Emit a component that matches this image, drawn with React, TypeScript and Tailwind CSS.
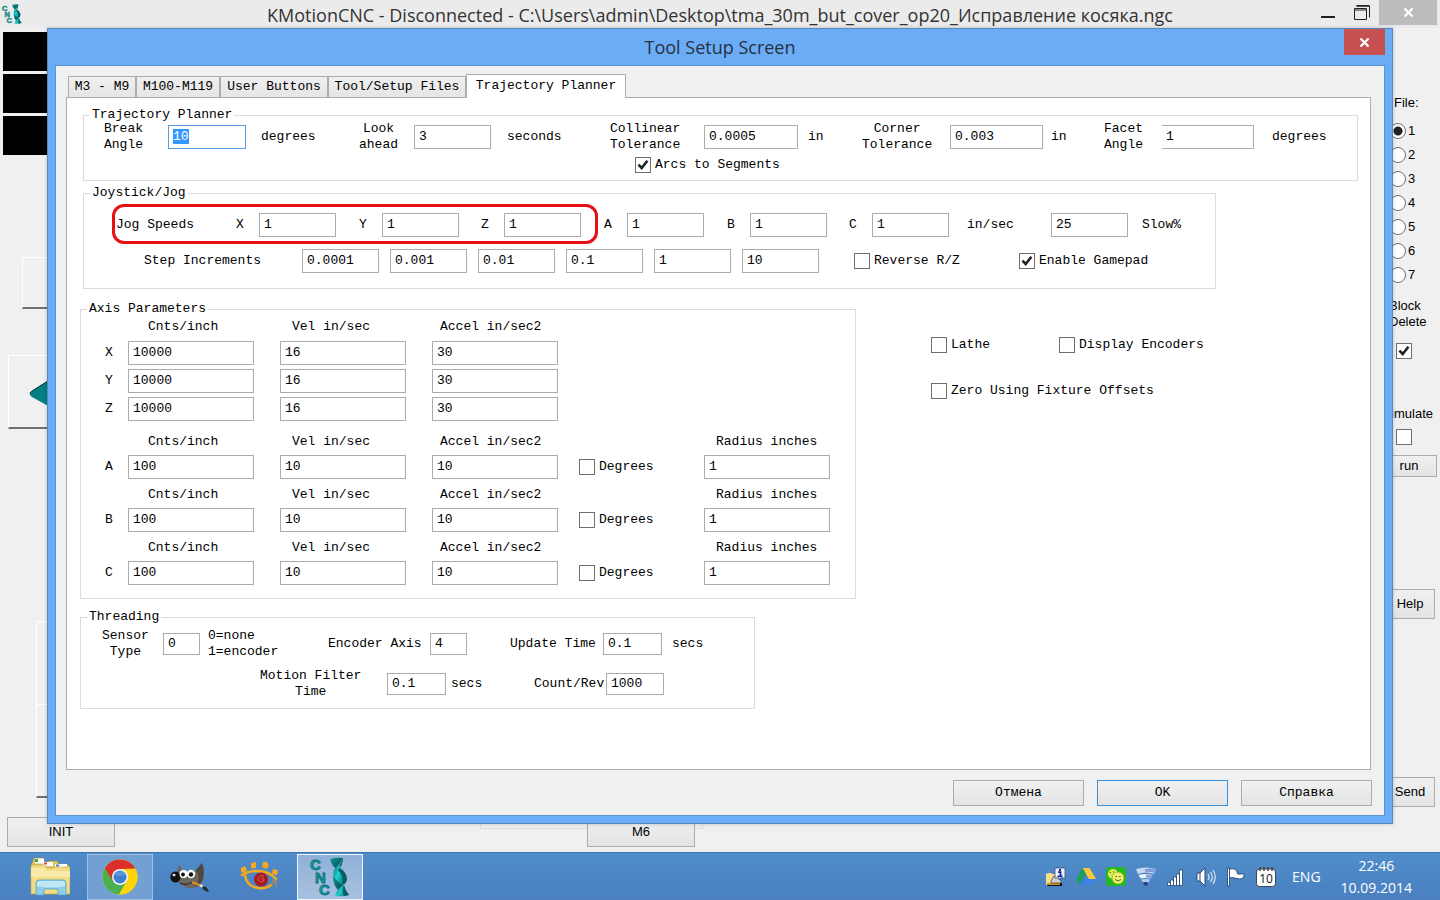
import React from 'react';

const MONO = "font-['Liberation_Mono','Courier_New',monospace]";
const UI = "font-['Open_Sans','Segoe_UI',sans-serif]";
const SANS = "font-['Liberation_Sans',Arial,sans-serif]";

type AxisRow = { axis: string; cnts: string; vel: string; accel: string };

const LINEAR_AXES: AxisRow[] = [
  { axis: 'X', cnts: '10000', vel: '16', accel: '30' },
  { axis: 'Y', cnts: '10000', vel: '16', accel: '30' },
  { axis: 'Z', cnts: '10000', vel: '16', accel: '30' },
];

const ROTARY_AXES: AxisRow[] = [
  { axis: 'A', cnts: '100', vel: '10', accel: '10' },
  { axis: 'B', cnts: '100', vel: '10', accel: '10' },
  { axis: 'C', cnts: '100', vel: '10', accel: '10' },
];

const STEPS = ['0.0001', '0.001', '0.01', '0.1', '1', '10'];
const JOG_AXES = ['X', 'Y', 'Z', 'A', 'B', 'C'];

const TABS = [
  { name: 'M3 - M9', width: 'w-[68px]' },
  { name: 'M100-M119', width: 'w-[84px]' },
  { name: 'User Buttons', width: 'w-[108px]' },
  { name: 'Tool/Setup Files', width: 'w-[138px]' },
  { name: 'Trajectory Planner', width: 'w-[160px]' },
];

/* ---------- form controls ---------- */

function TextField({
  className = 'w-[77px]',
  ...props
}: React.InputHTMLAttributes<HTMLInputElement>) {
  return (
    <input
      type="text"
      className={`h-6 border border-[#ababab] bg-white px-1 pb-0.5 leading-4 text-black outline-none selection:bg-[#3399ff] selection:text-white focus:border-[#569de5] ${className}`}
      {...props}
    />
  );
}

function CheckMark() {
  return (
    <svg
      className="pointer-events-none absolute inset-0 hidden h-4 w-4 peer-checked:block"
      viewBox="0 0 16 16"
      fill="none"
      stroke="#212121"
      strokeWidth="2.6"
    >
      <path d="M3.4 7.6 6.7 11 12.4 3.8" />
    </svg>
  );
}

function CheckBox({ label, checked, hideLabel }: { label: string; checked?: boolean; hideLabel?: boolean }) {
  return (
    <label className="flex h-4 items-center gap-1 whitespace-nowrap">
      <span className="relative h-4 w-4 shrink-0">
        <input
          type="checkbox"
          defaultChecked={checked}
          aria-label={label}
          className="peer block h-4 w-4 appearance-none border border-[#6f6f6f] bg-white"
        />
        <CheckMark />
      </span>
      {!hideLabel && <span>{label}</span>}
    </label>
  );
}

function Group({
  title,
  className = '',
  children,
}: {
  title: string;
  className?: string;
  children: React.ReactNode;
}) {
  return (
    <fieldset className={`border border-[#dcdcdc] ${className}`}>
      <legend className="ml-1.5 px-0.5 leading-3">{title}</legend>
      {children}
    </fieldset>
  );
}

function GrayButton({ className = '', children }: { className?: string; children: React.ReactNode }) {
  return (
    <button
      type="button"
      className={`border bg-linear-to-b from-[#f0f0f0] to-[#e4e4e4] text-center text-black ${className}`}
    >
      {children}
    </button>
  );
}

function CloseGlyph({ className }: { className: string }) {
  return (
    <svg className={className} viewBox="0 0 12 10" fill="none" stroke="white" strokeWidth="2.4">
      <path d="M1.5.5l9 9M10.5.5l-9 9" />
    </svg>
  );
}

/* ---------- tab page ---------- */

function TrajectoryGroup() {
  return (
    <Group title="Trajectory Planner" className="mr-3 ml-4 pb-[7px]">
      <div className="grid grid-cols-[64px_93px_98px_55px_93px_103px_94px_104px_54px_88px_101px_53px_58px_110px_1fr] items-center justify-items-start pl-5">
        <label htmlFor="break-angle" className="text-center">
          Break
          <br />
          Angle
        </label>
        <TextField
          id="break-angle"
          className="w-[78px]"
          defaultValue="10"
          autoFocus
          onFocus={e => e.currentTarget.select()}
        />
        <span>degrees</span>
        <label htmlFor="look-ahead" className="text-center">
          Look
          <br />
          ahead
        </label>
        <TextField id="look-ahead" defaultValue="3" />
        <span>seconds</span>
        <label htmlFor="collinear" className="text-center">
          Collinear
          <br />
          Tolerance
        </label>
        <TextField id="collinear" className="w-[94px]" defaultValue="0.0005" />
        <span>in</span>
        <label htmlFor="corner" className="text-center">
          Corner
          <br />
          Tolerance
        </label>
        <TextField id="corner" className="w-[93px]" defaultValue="0.003" />
        <span>in</span>
        <label htmlFor="facet" className="text-center">
          Facet
          <br />
          Angle
        </label>
        <TextField id="facet" className="w-[92px] border-l-0" defaultValue="1" />
        <span>degrees</span>
      </div>
      <div className="mt-1 pl-[551px]">
        <CheckBox label="Arcs to Segments" checked />
      </div>
    </Group>
  );
}

function JoystickGroup() {
  return (
    <Group title="Joystick/Jog" className="mt-1.5 ml-4 w-[1133px] pb-[15px]">
      <div className="relative mt-3.5 ml-8 grid grid-cols-[120px_23px_100px_23px_99px_23px_100px_23px_100px_23px_99px_23px_95px_84px_91px_1fr] items-center justify-items-start">
        <span>Jog Speeds</span>
        {JOG_AXES.map(axis => (
          <React.Fragment key={axis}>
            <label htmlFor={`jog-${axis}`}>{axis}</label>
            <TextField id={`jog-${axis}`} defaultValue="1" />
          </React.Fragment>
        ))}
        <span>in/sec</span>
        <TextField id="slow" defaultValue="25" />
        <label htmlFor="slow">Slow%</label>
        {/* marker around the X/Y/Z speeds */}
        <div className="pointer-events-none absolute -top-[9px] -left-1 h-10 w-[486px] rounded-xl border-3 border-[#e60f14]" />
      </div>
      <div className="mt-3 grid grid-cols-[158px_88px_88px_88px_88px_88px_112px_165px_1fr] items-center justify-items-start pl-[60px]">
        <span>Step Increments</span>
        {STEPS.map(step => (
          <TextField key={step} aria-label={`Step increment ${step}`} defaultValue={step} />
        ))}
        <CheckBox label="Reverse R/Z" />
        <CheckBox label="Enable Gamepad" checked />
      </div>
    </Group>
  );
}

const AXIS_GRID =
  'grid grid-cols-[23px_152px_152px_147px_125px_1fr] items-center justify-items-start pl-6';

function AxisHeader({ radius }: { radius?: boolean }) {
  return (
    <div className={AXIS_GRID}>
      <span />
      <span className="pl-5">Cnts/inch</span>
      <span className="pl-3">Vel in/sec</span>
      <span className="pl-2">Accel in/sec2</span>
      <span />
      {radius && <span className="pl-3">Radius inches</span>}
    </div>
  );
}

function AxisFields({ row, rotary }: { row: AxisRow; rotary?: boolean }) {
  return (
    <div className={AXIS_GRID}>
      <label htmlFor={`cnts-${row.axis}`}>{row.axis}</label>
      <TextField id={`cnts-${row.axis}`} className="w-[126px]" defaultValue={row.cnts} />
      <TextField aria-label={`${row.axis} Vel in/sec`} className="w-[126px]" defaultValue={row.vel} />
      <TextField aria-label={`${row.axis} Accel in/sec2`} className="w-[126px]" defaultValue={row.accel} />
      {rotary && (
        <>
          <CheckBox label="Degrees" />
          <TextField aria-label={`${row.axis} Radius inches`} className="w-[126px]" defaultValue="1" />
        </>
      )}
    </div>
  );
}

function AxisGroup() {
  return (
    <Group title="Axis Parameters" className="w-[776px] pb-[13px]">
      <div className="mt-1 flex flex-col gap-1">
        <div className="mb-0.5">
          <AxisHeader />
        </div>
        {LINEAR_AXES.map(row => (
          <AxisFields key={row.axis} row={row} />
        ))}
      </div>
      <div className="mt-[13px] flex flex-col gap-2">
        {ROTARY_AXES.map(row => (
          <div key={row.axis} className="flex flex-col gap-[5px]">
            <AxisHeader radius />
            <AxisFields row={row} rotary />
          </div>
        ))}
      </div>
    </Group>
  );
}

function ThreadingGroup() {
  return (
    <Group title="Threading" className="mt-3 ml-[13px] w-[675px] pb-2">
      <div className="mt-[5px] grid grid-cols-[61px_45px_120px_102px_80px_93px_69px_1fr] items-center justify-items-start pl-[21px]">
        <label htmlFor="sensor" className="text-center">
          Sensor
          <br />
          Type
        </label>
        <TextField id="sensor" className="h-[22px] w-[37px]" defaultValue="0" />
        <span>
          0=none
          <br />
          1=encoder
        </span>
        <label htmlFor="encoder-axis">Encoder Axis</label>
        <TextField id="encoder-axis" className="h-[22px] w-[37px]" defaultValue="4" />
        <label htmlFor="update-time">Update Time</label>
        <TextField id="update-time" className="h-[22px] w-[59px]" defaultValue="0.1" />
        <span>secs</span>
      </div>
      <div className="mt-2 grid grid-cols-[127px_64px_83px_72px_1fr] items-center justify-items-start pl-[179px]">
        <label htmlFor="filter-time" className="text-center">
          Motion Filter
          <br />
          Time
        </label>
        <TextField id="filter-time" className="h-[22px] w-[59px]" defaultValue="0.1" />
        <span>secs</span>
        <label htmlFor="count-rev">Count/Rev</label>
        <TextField id="count-rev" className="h-[22px] w-[58px]" defaultValue="1000" />
      </div>
    </Group>
  );
}

function SetupDialog() {
  return (
    <div
      role="dialog"
      aria-label="Tool Setup Screen"
      className="absolute inset-x-[47px] top-0 bottom-7 flex flex-col border border-[#5689c4] bg-[#6bacf7] px-[7px] pb-[7px] shadow-[0_0_4px_rgba(0,0,0,0.2)]"
    >
      <div className="grid h-9 shrink-0 grid-cols-[1fr_auto_1fr] items-start">
        <h2 className={`col-start-2 text-[18px] leading-9 text-[#26313d] ${UI}`}>Tool Setup Screen</h2>
        <button
          type="button"
          aria-label="Close dialog"
          className="flex h-[26px] w-[41px] items-center justify-center justify-self-end bg-[#c75050]"
        >
          <CloseGlyph className="h-[9px] w-[11px]" />
        </button>
      </div>

      <div className={`flex flex-1 flex-col border border-[#5b92d2] bg-[#f0f0f0] pt-2 pr-3 pb-[9px] pl-2.5 text-[13px] leading-4 text-black ${MONO}`}>
        <div role="tablist" className="relative z-10 flex h-[23px] items-end pl-0.5">
          {TABS.map((tab, i) =>
            i === TABS.length - 1 ? (
              <button
                key={tab.name}
                type="button"
                role="tab"
                aria-selected
                className={`-mb-px h-6 border border-b-0 border-[#acacac] bg-white pb-0.5 whitespace-nowrap ${tab.width}`}
              >
                {tab.name}
              </button>
            ) : (
              <button
                key={tab.name}
                type="button"
                role="tab"
                aria-selected={false}
                className={`h-[21px] border border-b-0 border-[#acacac] bg-linear-to-b from-[#f0f0f0] to-[#e5e5e5] whitespace-nowrap ${tab.width}`}
              >
                {tab.name}
              </button>
            )
          )}
        </div>

        <div className="mr-px flex-1 border border-[#acacac] bg-white pt-[11px]">
          <TrajectoryGroup />
          <JoystickGroup />
          <div className="mt-3.5 ml-[13px] flex gap-[75px]">
            <AxisGroup />
            <div className="mt-[34px] flex flex-col gap-[30px]">
              <div className="grid grid-cols-[128px_1fr]">
                <CheckBox label="Lathe" />
                <CheckBox label="Display Encoders" />
              </div>
              <CheckBox label="Zero Using Fixture Offsets" />
            </div>
          </div>
          <ThreadingGroup />
        </div>

        <div className="mt-2.5 flex justify-end gap-[13px]">
          <GrayButton className="h-[26px] w-[131px] border-[#acacac]">Отмена</GrayButton>
          <GrayButton className="h-[26px] w-[131px] border-[#3c8fdc]">OK</GrayButton>
          <GrayButton className="h-[26px] w-[131px] border-[#acacac]">Справка</GrayButton>
        </div>
      </div>
    </div>
  );
}

/* ---------- window behind the dialog ---------- */

const RAISED = 'border-t border-l border-b-2 border-t-white border-l-white border-b-[#707070] bg-[#f0f0f0]';

function LeftStrip() {
  return (
    <div className="flex w-[115px] flex-col">
      <div className="mt-1 ml-[3px] flex flex-col gap-[3px]">
        <div className="h-[39px] bg-black" />
        <div className="h-[39px] bg-black" />
        <div className="h-[39px] bg-black" />
      </div>
      <button type="button" aria-label="Jog up" className={`mt-[102px] ml-[22px] h-[52px] ${RAISED}`} />
      <button type="button" aria-label="Jog left" className={`mt-[46px] ml-2 h-[74px] pl-5 ${RAISED}`}>
        <svg className="h-10 w-10" viewBox="0 0 40 40">
          <path d="M1 22 Q1 20 3 19 L30 2 V40 L3 25 Q1 24 1 22Z" fill="#008080" />
          <path d="M1 22 Q1 20 3 19 L30 2" fill="none" stroke="#033" strokeWidth="1" />
        </svg>
      </button>
      <div className="mt-48 ml-9 h-[83px] border-t border-l border-white" />
      <div className={`ml-9 h-[94px] ${RAISED}`} />
    </div>
  );
}

function RightStrip() {
  return (
    <div className="flex w-16 flex-col pt-[67px]">
      <span className="pl-[18px]">File:</span>
      <div className="mt-2">
        {['1', '2', '3', '4', '5', '6', '7'].map(n => (
          <label key={n} className="flex h-6 items-center gap-0.5 pl-3.5">
            <input
              type="radio"
              name="file"
              defaultChecked={n === '1'}
              className="h-4 w-4 appearance-none rounded-full border border-[#707070] bg-white checked:bg-[radial-gradient(circle,#212121_4px,white_5px)]"
            />
            {n}
          </label>
        ))}
      </div>
      <span className="mt-[11px] pl-[13px]">
        Block
        <br />
        Delete
      </span>
      <div className="mt-[13px] pl-5">
        <CheckBox label="Block Delete" checked hideLabel />
      </div>
      <span className="mt-[47px] pr-[7px] text-right">Simulate</span>
      <div className="mt-[7px] pl-5">
        <CheckBox label="Simulate" hideLabel />
      </div>
      <GrayButton className="mt-2.5 mr-[3px] ml-[5px] h-[22px] border-[#acacac]">run</GrayButton>
      <GrayButton className="mt-28 mr-[5px] ml-[9px] h-[30px] border-[#acacac]">Help</GrayButton>
      <GrayButton className="mt-[158px] mr-[5px] ml-[9px] h-[30px] border-[#acacac]">Send</GrayButton>
    </div>
  );
}

function CncLogo({ className }: { className: string }) {
  return (
    <svg className={`overflow-visible ${className}`} viewBox="0 0 40 40">
      <defs>
        <linearGradient id="helix" x1="0" y1="0" x2="1" y2="1">
          <stop offset="0" stopColor="#04585c" />
          <stop offset=".5" stopColor="#1fd0cc" />
          <stop offset="1" stopColor="#046468" />
        </linearGradient>
        <linearGradient id="helix-dark" x1="0" y1="0" x2="1" y2="1">
          <stop offset="0" stopColor="#0c9a9a" />
          <stop offset="1" stopColor="#033f42" />
        </linearGradient>
      </defs>
      <g
        fill="#0fa3a3"
        stroke="#0b6c70"
        strokeWidth=".8"
        fontFamily="'Liberation Sans', Arial, sans-serif"
        fontWeight="bold"
        fontSize="15"
      >
        <text x="0" y="13">C</text>
        <text x="5" y="26">N</text>
        <text x="9" y="38">C</text>
      </g>
      <path d="M20 2 Q26 0 33 1 Q33 8 28 13 Q22 10 20 2Z" fill="url(#helix-dark)" />
      <path d="M33 1 Q30 7 25 11 Q22 16 24 22 Q28 27 35 27 Q38 21 34 16 Q29 12 30 8Z" fill="url(#helix)" />
      <path d="M30 11 Q37 16 37 22 Q37 26 32 28 Q34 19 28 13Z" fill="#055e62" />
      <path d="M23 19 Q28 26 34 28 Q30 31 28 33 Q23 28 23 19Z" fill="url(#helix-dark)" />
      <path d="M34 27 Q34 33 39 38 Q32 40 25 39 Q26 33 34 27Z" fill="url(#helix)" />
      <path d="M34 28 Q35 33 39 38 L34 39 Q31 34 34 28Z" fill="#055e62" />
    </svg>
  );
}

/* ---------- taskbar ---------- */

function FolderIcon() {
  return (
    <svg className="h-10 w-10" viewBox="0 0 40 40">
      <path d="M2 6 L4 1h9l2 4h3l1-1h8l2 3h8l3 3v27H2z" fill="#dfc266" stroke="#a98c3c" strokeWidth=".6" />
      <path d="M5 1.500h9v5H5z" fill="#fff" />
      <path d="M5 2h3v3H5z" fill="#3aa655" />
      <path d="M13 5h10v4H13z" fill="#fff" />
      <path d="M14 5.500h3v2h-3z" fill="#d34836" />
      <path d="M25 7h12v4H25z" fill="#fff" />
      <path d="M26 7.500h3v2h-3z" fill="#3a7fc4" />
      <path d="M1 8h13l3 3h7l2-1h14v27H1z" fill="#f3dc84" stroke="#c4a54c" strokeWidth=".6" />
      <path d="M1 11h13l3 3h23v6H1z" fill="#f9eaa8" />
      <path d="M6 38V26q0-3 3-3h24q3 0 3 3v12h-8v-6H14v6z" fill="#8fd0e8" stroke="#4fa5c8" strokeWidth=".8" />
      <path d="M7 29V26q0-2 2-2h24q2 0 2 2v3q-14 3-28 0z" fill="#bfe7f4" />
    </svg>
  );
}

function ChromeIcon() {
  return (
    <svg className="h-9 w-9" viewBox="0 0 36 36">
      <circle cx="18" cy="18" r="17.500" fill="#ffd40b" />
      <path d="M18 18 L10.200 22.500 L2.800 9.300 A17.500 17.500 0 0 1 33.400 9.800 L18 10z" fill="#dc2f27" />
      <path d="M2.800 9.300 A17.500 17.500 0 0 0 17 35.500 L25 22 L18 18 L10.900 22z" fill="#4bb04f" />
      <path d="M17 35.500 L25.200 21.500 A8 8 0 0 0 24.500 13 L21 10 L33.400 9.800 A17.500 17.500 0 0 1 17 35.500z" fill="#ffd40b" />
      <circle cx="18" cy="18" r="8" fill="#f4f8fb" />
      <circle cx="18" cy="18" r="6.500" fill="#3d7fcf" />
      <path d="M12 16 a6.500 6.500 0 0 1 12 0 q-6 2-12 0z" fill="#5b97dc" />
    </svg>
  );
}

function GimpIcon() {
  return (
    <svg className="h-10 w-10" viewBox="0 0 40 40">
      <path d="M9 8 L13 14 Q20 16 26 13 L32 6 Q35 14 33 22 Q31 31 21 31 Q13 31 10 26 L4 22z" fill="#6e675d" />
      <path d="M26 13 L32 6 Q35 14 33 22 Q31 28 26 30 Q31 20 26 13z" fill="#4e493f" />
      <ellipse cx="5.500" cy="20" rx="5.200" ry="5.500" fill="#121212" />
      <ellipse cx="4" cy="18" rx="1.600" ry="1.300" fill="#ddd" />
      <circle cx="13.500" cy="17" r="4" fill="#fff" />
      <circle cx="21" cy="17" r="4.200" fill="#fff" />
      <circle cx="13" cy="17.500" r="1.900" fill="#111" />
      <circle cx="21" cy="17.500" r="2.200" fill="#111" />
      <path d="M10 26 Q16 29 23 25" fill="none" stroke="#2c2a26" strokeWidth="1.300" />
      <path d="M22 25 L32 29" stroke="#e08a2e" strokeWidth="2.400" />
      <path d="M30 28 L34 30.500" stroke="#ddd" strokeWidth="2.600" />
      <path d="M33 29 q4 0 6 6 q-5-1-7-4z" fill="#22303c" />
    </svg>
  );
}

function EyeIcon() {
  return (
    <svg className="h-10 w-10" viewBox="0 0 40 40">
      <g fill="#f7a81b">
        <path d="M1 11l4-2 2 4-3 3-3-1z" />
        <path d="M11 6l5-1v6l-5 .500z" />
        <path d="M23 5l4 0 2 4-3 3-4-2z" />
        <path d="M33 12l5 1-1 5-5-1z" />
      </g>
      <path
        d="M2 18 Q8 14 18 14 Q29 14 36 22 M5 18 Q6 29 18 31 Q26 32 31 28"
        fill="none"
        stroke="#f7a81b"
        strokeWidth="2.600"
        strokeLinecap="round"
      />
      <circle cx="21" cy="22.500" r="7" fill="#a51d23" />
      <path d="M21 22 q2-2 3 0 q0 3-3 3 q-4-1-3-4 q2-4 6-2" fill="none" stroke="#d85a4a" strokeWidth="1" />
      <path d="M31 28l3-4M33 23l4 3M35 27l2 2" stroke="#c98a2c" strokeWidth="1.200" />
    </svg>
  );
}

const TASKS = [
  { name: 'File Explorer', icon: <FolderIcon />, look: 'border-transparent' },
  { name: 'Chrome', icon: <ChromeIcon />, look: 'border-[#9fbfe2] bg-[#73a0d2]' },
  { name: 'GIMP', icon: <GimpIcon />, look: 'border-transparent' },
  { name: 'Viewer', icon: <EyeIcon />, look: 'border-transparent' },
  { name: 'KMotionCNC', icon: <CncLogo className="h-10 w-10" />, look: 'border-[#eef4fb] bg-linear-to-b from-[#8fb0d8] to-[#a9c1e0]' },
];

function TrayIcons() {
  return (
    <div className="flex items-center gap-2.5">
      <svg className="h-5 w-5" viewBox="0 0 20 20">
        <path d="M0 7l2-1h3l1 1h3v11H0z" fill="#f8e08a" />
        <path d="M1 19h15v-3H4z" fill="#14120c" />
        <path d="M1 16h13v2H1z" fill="#c8952b" />
        <path d="M5 14l3-5h4l3 5v2H5z" fill="#cfcfcf" stroke="#444" strokeWidth=".8" />
        <path d="M9 1h10v10h-4l-2 2v-2h-4z" fill="#f2f6ff" stroke="#3c4a70" strokeWidth=".8" />
        <path d="M12 5.200h2.500V9M11.500 9.400h5" stroke="#0c2a9a" strokeWidth="1.800" fill="none" />
        <circle cx="14" cy="2.900" r="1.200" fill="#0c2a9a" />
      </svg>
      <svg className="h-5 w-5" viewBox="0 0 20 20">
        <path d="M6.500 1h7L20 12h-7z" fill="#fdc83b" />
        <path d="M6.500 1L0 12l3.500 6L10 7z" fill="#1e9e5c" />
        <path d="M7 12h13l-3.500 6H3.500z" fill="#3f7fe8" />
      </svg>
      <svg className="h-5 w-5" viewBox="0 0 20 20">
        <rect x="0" y="0" width="20" height="19" rx="3" fill="#27b81f" />
        <circle cx="7" cy="7" r="5" fill="#d9ea55" />
        <circle cx="12" cy="11" r="6" fill="#eef06c" stroke="#8fae22" strokeWidth=".7" />
        <path d="M9 12.500q3 3 6 0M9.500 9.500h1.500M13 9.500h1.500M4 5.500h1M7 5h1" stroke="#4d6a12" fill="none" />
      </svg>
      <svg className="h-5 w-5" viewBox="0 0 20 20">
        <path d="M0 2q10-3 20 0l-2 5Q10 4 2 7z" fill="#c7d8f0" />
        <path d="M9 2q6-1 11 0l-2 4q-4-2-9-1z" fill="#7f9fd2" />
        <path d="M2.500 8q7-2 14 0l-2 3.500q-5-1-10 0z" fill="#e6effb" />
        <path d="M10 7.500q3 0 6.500.500l-2 3.500q-2-1-4.500-.800z" fill="#89a8d8" />
        <path d="M5 12.500q5-1 9 0l-1.500 3q-3-.500-5.500 0z" fill="#b4cbec" />
        <path d="M7 15.500q3-1 5 0l-1 3q-2 1-3-1z" fill="#1d3f86" />
      </svg>
      <svg className="h-5 w-5" viewBox="0 0 20 20" fill="#fff" stroke="#28476e" strokeWidth=".8">
        <path d="M1.500 15.500h3v3h-3zM4.500 13h3v5.500h-3zM7.500 10h3v8.500h-3zM10.500 7h3v11.500h-3zM13.500 3h3v15.500h-3z" />
      </svg>
      <svg className="h-5 w-5" viewBox="0 0 20 20" fill="none">
        <path d="M1 6h3l5-5v18l-5-5H1z" fill="#fff" stroke="#28476e" strokeWidth="1" />
        <path d="M4 6v8" stroke="#28476e" />
        <path d="M12 7q2 3 0 6M14.500 5q3.500 5 0 10M17 3q4.500 7 0 14" stroke="#dce9f8" strokeWidth="1.200" />
      </svg>
      <svg className="h-5 w-5" viewBox="0 0 20 20" fill="#fff" stroke="#28476e" strokeWidth=".9">
        <path d="M1.500 1h2v18h-2z" />
        <path d="M3.500 2q4-1 7 1l1 4h7q-1 5-5 5l-5-1q-2-1-5 0z" />
      </svg>
      <svg className="h-5 w-5" viewBox="0 0 20 20">
        <rect x=".5" y="2" width="19" height="17.500" rx="3" fill="#fff" stroke="#444" />
        <path d="M4 0v4M8 0v4M12 0v4M16 0v4" stroke="#444" strokeWidth="1.500" />
        <text x="10" y="16" textAnchor="middle" fontSize="12" fill="#111" fontFamily="'Open Sans', sans-serif">
          10
        </text>
      </svg>
    </div>
  );
}

function Taskbar() {
  return (
    <footer
      className={`flex h-12 shrink-0 items-center justify-between border-t border-[#3f75ad] bg-linear-to-b from-[#508dca] to-[#4a80bf] text-white ${UI}`}
    >
      <div className="flex gap-1 pl-[17px]">
        {TASKS.map(task => (
          <button
            key={task.name}
            type="button"
            aria-label={task.name}
            className={`flex h-[46px] w-[66px] items-center justify-center border ${task.look}`}
          >
            {task.icon}
          </button>
        ))}
      </div>
      <div className="flex items-center pr-7">
        <TrayIcons />
        <span className="ml-4 text-[14px]">ENG</span>
        <div className="ml-5 text-center text-[14px] leading-[22px]">
          <div>22:46</div>
          <div>10.09.2014</div>
        </div>
      </div>
    </footer>
  );
}

export default function App() {
  return (
    <div className="flex min-h-screen flex-col overflow-hidden bg-[#f0f0f0]">
      <header className="grid h-7 shrink-0 grid-cols-[1fr_auto_1fr] items-start bg-[#ebebeb]">
        <CncLogo className="mt-1 ml-0.5 h-5 w-5" />
        <h1 className={`text-[18px] leading-[30px] whitespace-nowrap text-[#333] ${UI}`}>
          KMotionCNC - Disconnected - C:\Users\admin\Desktop\tma_30m_but_cover_op20_Исправление косяка.ngc
        </h1>
        <div className="flex justify-end pr-[3px]">
          <button type="button" aria-label="Minimize" className="flex h-[25px] w-[34px] items-center justify-center">
            <svg className="h-4 w-4" viewBox="0 0 16 16">
              <path d="M1 11h14v2H1z" fill="#222" />
            </svg>
          </button>
          <button type="button" aria-label="Restore" className="flex h-[25px] w-[34px] items-center justify-center">
            <svg className="h-4 w-4" viewBox="0 0 16 16" fill="none" stroke="#222">
              <path d="M.5 3.500h12v11H.5zM.5 5h12M2.500 1h13v11.500" />
              <path d="M2.500.5h13" strokeWidth="2" />
            </svg>
          </button>
          <button type="button" aria-label="Close" className="flex h-[25px] w-[58px] items-center justify-center bg-[#bcbcbc]">
            <CloseGlyph className="h-[9px] w-[11px]" />
          </button>
        </div>
      </header>

      <main className={`relative flex flex-1 flex-col text-[13px] leading-4 text-black ${SANS}`}>
        <div className="flex flex-1 justify-between">
          <LeftStrip />
          <RightStrip />
        </div>
        <div className="flex items-end pb-[5px] pl-[7px]">
          <GrayButton className="h-[30px] w-[108px] border-[#acacac]">INIT</GrayButton>
          <div className="ml-[365px] h-3 w-[107px] self-start border-b border-l border-[#dcdcdc]" />
          <GrayButton className="h-[30px] w-[108px] border-[#acacac]">M6</GrayButton>
          <div className="h-3 w-2 self-start border-r border-b border-[#dcdcdc]" />
        </div>
        <SetupDialog />
      </main>
      <Taskbar />
    </div>
  );
}
